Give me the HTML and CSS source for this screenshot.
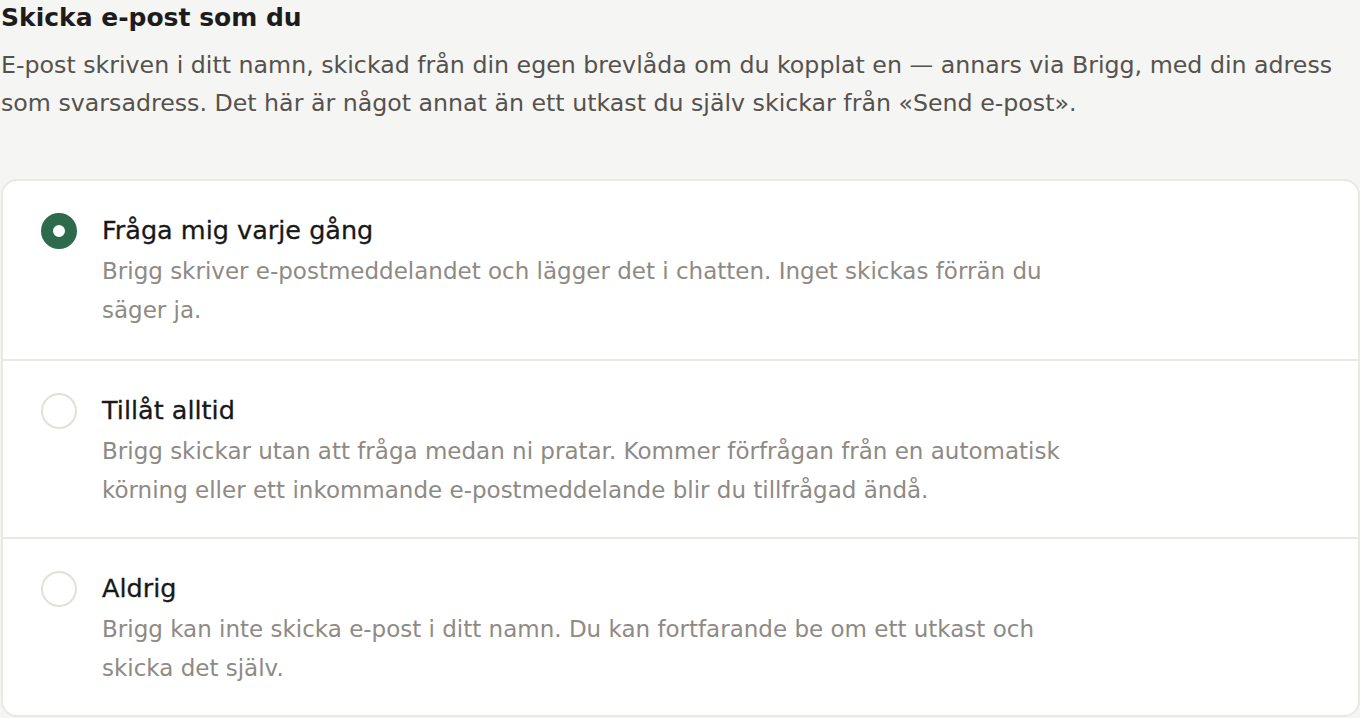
FILE: index.html
```html
<!DOCTYPE html>
<html lang="sv">
<head>
<meta charset="utf-8">
<link rel="stylesheet" href="styles.css">
</head>
<body>
<section class="settings">
  <h2 class="title">Skicka e-post som du</h2>
  <p class="lead">E-post skriven i ditt namn, skickad från din egen brevlåda om du kopplat en — annars via Brigg, med din adress som svarsadress. Det här är något annat än ett utkast du själv skickar från «Send e-post».</p>
  <div class="card">
    <div class="option">
      <span class="radio checked"></span>
      <div class="text">
        <div class="opt-title">Fråga mig varje gång</div>
        <div class="opt-desc">Brigg skriver e-postmeddelandet och lägger det i chatten. Inget skickas förrän du säger ja.</div>
      </div>
    </div>
    <div class="option">
      <span class="radio"></span>
      <div class="text">
        <div class="opt-title">Tillåt alltid</div>
        <div class="opt-desc">Brigg skickar utan att fråga medan ni pratar. Kommer förfrågan från en automatisk körning eller ett inkommande e-postmeddelande blir du tillfrågad ändå.</div>
      </div>
    </div>
    <div class="option">
      <span class="radio"></span>
      <div class="text">
        <div class="opt-title">Aldrig</div>
        <div class="opt-desc">Brigg kan inte skicka e-post i ditt namn. Du kan fortfarande be om ett utkast och skicka det själv.</div>
      </div>
    </div>
  </div>
</section>
</body>
</html>
```

FILE: styles.css
```css
* { box-sizing: border-box; }
html, body { margin: 0; padding: 0; }
body {
  background: #f5f5f3;
  font-family: "DejaVu Sans", "Open Sans", sans-serif;
  color: #1a1a1a;
}
.settings { padding: 0 0 0 1px; width: 1360px; }
.title {
  margin: 0;
  font-size: 25px;
  font-weight: 700;
  line-height: 36px;
  color: #1c1c1c;
}
.lead {
  margin: 10px 0 0 0;
  font-size: 23.7px;
  line-height: 38px;
  color: #55524d;
}
.card {
  margin-top: 57px;
  background: #ffffff;
  border: 2px solid #eae8e3;
  border-radius: 16px;
  overflow: hidden;
  width: 1359px;
}
.option {
  display: flex;
  align-items: flex-start;
  gap: 25px;
  padding: 32px 40px 30px 38px;
  height: 178px;
}
.option + .option { border-top: 2px solid #eae8e3; }
.radio {
  flex: none;
  width: 36px;
  height: 36px;
  border-radius: 50%;
  border: 2px solid #e2e0da;
  background: #fff;
}
.radio.checked {
  border: 12px solid #2e6a4c;
  background: #fff;
}
.text { max-width: 960px; }
.opt-title {
  font-size: 25.5px;
  line-height: 34px;
  color: #181818;
  -webkit-text-stroke: 0.3px #181818;
}
.opt-desc {
  margin-top: 5px;
  font-size: 23px;
  line-height: 39px;
  color: #8e8a84;
}
```
